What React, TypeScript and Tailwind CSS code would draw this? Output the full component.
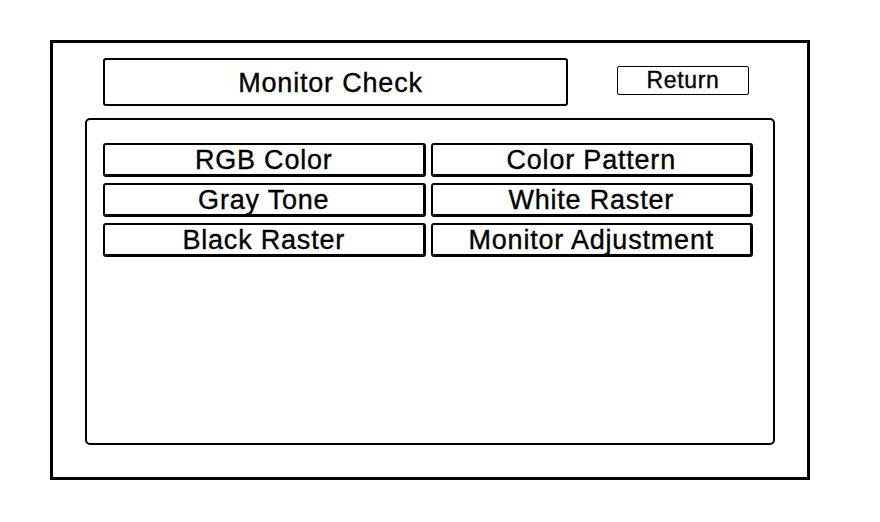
const items = [
  "RGB Color",
  "Color Pattern",
  "Gray Tone",
  "White Raster",
  "Black Raster",
  "Monitor Adjustment",
];

export default function App() {
  return (
    <div className="h-[522px] w-[880px] bg-white pl-[50px] pt-[40px] font-['Liberation_Sans',Arial,sans-serif] text-black [-webkit-text-stroke:0.35px_black]">
      <div className="h-[440px] w-[760px] border-[3px] border-black">
        <div className="flex items-start">
          <div className="ml-[50px] mt-[15px] flex h-[48px] w-[465px] items-center justify-center rounded-[3px] border-2 border-black pr-[10px] pt-[2px] text-[27px] tracking-[0.8px]">
            Monitor Check
          </div>
          <button className="ml-[49px] mt-[23px] flex h-[29px] w-[132px] items-center justify-center rounded-[2px] border-[1.5px] border-black text-[23px] leading-none tracking-[0.7px]">
            Return
          </button>
        </div>
        <div className="ml-[32px] mt-[12px] h-[327px] w-[690px] rounded-[5px] border-2 border-black pl-[16px] pt-[23px]">
          <div className="grid w-[650px] grid-cols-2 gap-x-[5px] gap-y-[6px]">
            {items.map((label) => (
              <button
                key={label}
                className="flex h-[34px] items-center justify-center rounded-[3px] border-t-2 border-l-2 border-r-[3px] border-b-[3px] border-black pt-[2px] text-[27px] leading-none tracking-[0.8px]"
              >
                {label}
              </button>
            ))}
          </div>
        </div>
      </div>
    </div>
  );
}
